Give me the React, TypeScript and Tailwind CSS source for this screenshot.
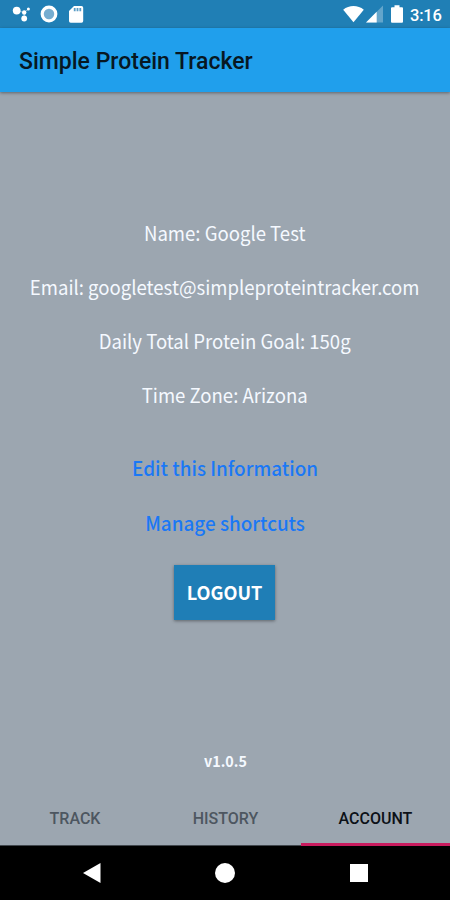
import React from "react";

const details = [
  "Name: Google Test",
  "Email: googletest@simpleproteintracker.com",
  "Daily Total Protein Goal: 150g",
  "Time Zone: Arizona",
];

function StatusBar() {
  return (
    <header className="flex h-7 shrink-0 items-center bg-[#207fb5] text-white">
      <svg className="ml-3 h-5 w-5" viewBox="0 0 20 20" fill="currentColor">
        <circle cx="4.7" cy="6.6" r="3.9" />
        <path d="M4.700 6.600 12.200 8.500 16.400 5M12.200 8.500v6" fill="none" stroke="currentColor" strokeWidth="0.8" opacity=".6" />
        <circle cx="12.2" cy="8.5" r="2.2" />
        <circle cx="16.4" cy="5" r="1.5" />
        <circle cx="12.2" cy="14.5" r="2.9" />
      </svg>
      <svg className="ml-2 h-[18px] w-[18px]" viewBox="0 0 18 18">
        <circle cx="9" cy="9" r="5.5" fill="#76add0" />
        <circle cx="9" cy="9" r="6.8" fill="none" stroke="#fff" strokeWidth="3.2" />
      </svg>
      <svg className="ml-[10px] h-[18px] w-4" viewBox="0 0 16 18">
        <path d="M6 1h7.500Q15.200 1 15.200 2.700V16q0 1.700-1.700 1.700H2.700Q1 17.700 1 16V6z" fill="#fff" />
        <path d="M6.700 3v3.300M9.500 3v3.300M12.300 3v3.300" stroke="#5a9dc6" strokeWidth="1.8" />
      </svg>
      <svg className="ml-auto h-[18px] w-[21px]" viewBox="0 0 21 18" fill="currentColor">
        <path d="M.2 4.700C6-.3 15-.3 20.800 4.700L10.500 17.200z" />
      </svg>
      <svg className="ml-0.5 h-[18px] w-[17px]" viewBox="0 0 17 18" fill="currentColor">
        <path d="M0 17.500 17 .5v17z" opacity=".3" />
        <path d="M0 17.500 10.700 6.800v10.700z" />
      </svg>
      <svg className="ml-2 h-[18px] w-3" viewBox="0 0 12 18" fill="currentColor">
        <path d="M3.500 0.300h5v1.900H11q1 0 1 1v13.500q0 1-1 1H1q-1 0-1-1V3.200q0-1 1-1h2.500z" />
      </svg>
      <time className="mr-2 ml-[7px] w-8 pt-[3px] text-[16.500px] leading-7 font-medium tracking-[-0.2px] whitespace-nowrap">
        3:16
      </time>
    </header>
  );
}

function Tabs() {
  return (
    <nav className="grid h-[55px] shrink-0 grid-cols-[150px_151px_149px] border-b border-[#41474d] text-center text-[16px] leading-[55px] font-medium text-[#4d5660]">
      <span className="h-[55px]">TRACK</span>
      <span className="h-[55px]">HISTORY</span>
      <span className="flex h-[55px] flex-col text-[#0c1117]">
        <span className="h-[52px]">ACCOUNT</span>
        <span className="h-[3px] bg-[#c91b5e]" />
      </span>
    </nav>
  );
}

function SystemNavigation() {
  return (
    <footer className="grid h-[54px] shrink-0 grid-cols-3 bg-black px-[25px]">
      <svg className="mt-[17px] ml-[58px] h-5 w-[18px]" viewBox="0 0 18 20">
        <path d="M0 10 17.500 0v20z" fill="#fff" />
      </svg>
      <span className="mt-[17px] h-5 w-5 justify-self-center rounded-full bg-white" />
      <span className="mt-[18px] ml-[58px] h-[18px] w-[18px] bg-white" />
    </footer>
  );
}

export default function App() {
  return (
    <div className="flex h-[900px] w-[450px] flex-col overflow-hidden bg-[#9ca6b0] font-[Roboto,sans-serif]">
      <StatusBar />
      <div className="z-10 flex h-16 shrink-0 items-center bg-[#209fec] pt-1 pl-[19px] shadow-[0_1px_3px_rgba(0,0,0,0.4)]">
        <h1 className="text-[23px] leading-8 font-medium whitespace-nowrap text-[#071722]">
          Simple Protein Tracker
        </h1>
      </div>
      <main className="flex flex-1 flex-col items-center font-['Noto_Sans_CJK_JP','Noto_Sans_CJK_SC',sans-serif] text-[#f5f9ff]">
        <div className="mt-[114px] flex scale-x-[0.952] flex-col items-center text-[19.500px] whitespace-nowrap">
          {details.map((line) => (
            <p key={line} className="h-[54px] leading-[54px]">{line}</p>
          ))}
        </div>
        <div className="mt-[19px] flex scale-x-[0.968] flex-col items-center text-[19.500px] font-medium text-[#1a78f6]">
          <a className="h-[55px] leading-[54px]">Edit this Information</a>
          <a className="h-[55px] leading-[54px]">Manage shortcuts</a>
        </div>
        <button className="mt-[14px] mr-px h-[55px] w-[101px] bg-[#1f7eb6] pb-0.5 text-[19px] leading-[53px] font-bold text-white shadow-[0_1px_3px_rgba(0,0,0,0.4)]">
          <span className="inline-block scale-x-[0.955]">LOGOUT</span>
        </button>
        <p className="mt-auto mb-[18px] scale-x-[0.955] text-[15px] leading-6 font-bold">v1.0.5</p>
      </main>
      <Tabs />
      <SystemNavigation />
    </div>
  );
}
